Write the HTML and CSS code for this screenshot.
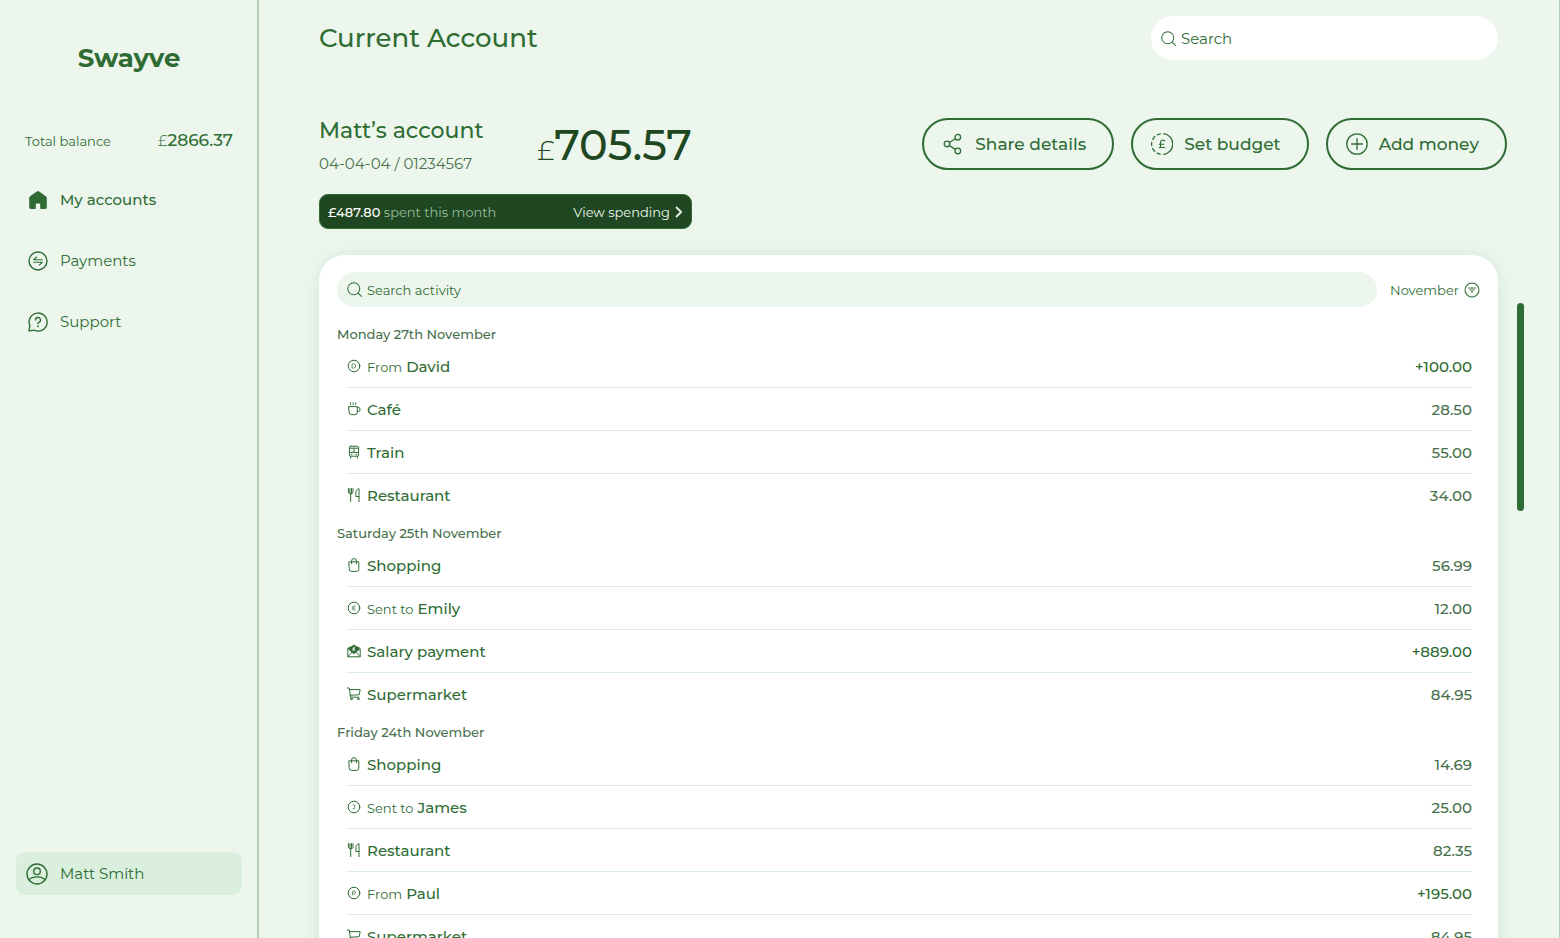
FILE: index.html
```html
<!DOCTYPE html>
<html lang="en-GB">
<head>
<meta charset="utf-8">
<title>Swayve – Current Account</title>
<meta name="viewport" content="width=device-width, initial-scale=1">
<link rel="stylesheet" href="styles.css">
</head>
<body>
<svg class="sprite" aria-hidden="true">
  <symbol id="i-search" viewBox="0 0 16 16"><circle cx="7.2" cy="7.2" r="6.4"/><path d="M11.8 11.800 15.400 15.400"/></symbol>
  <symbol id="i-cup" viewBox="0 0 14 14"><path d="M2 4.600h8.300v5.700a2.400 2.400 0 0 1-2.400 2.400H4.400A2.400 2.400 0 0 1 2 10.300zM10.300 5.400h1a1.700 1.700 0 0 1 1.700 1.700v.7a1.700 1.700 0 0 1-1.700 1.700h-1M3.500.9v1.500M6.100.9v1.500M8.700.9v1.500"/></symbol>
  <symbol id="i-train" viewBox="0 0 14 14"><rect x="2.400" y="1.200" width="9.200" height="10" rx="1.300"/><path d="M2.400 3.200h9.200M2.400 7.400h9.200M7 3.200v4.200M4.300 9.300h.8M8.900 9.300h.8M3.600 11.200v1.900M10.400 11.200v1.900"/></symbol>
  <symbol id="i-food" viewBox="0 0 14 14"><path d="M1.400.6v3.400c0 1.200.9 1.800 2.300 1.800S6 5.200 6 4V.6M2.900.6v5M4.500.6v5M3.700 5.800v7.800M12 13.600V.7C9.700 1 8.900 3 8.900 5v3.500H12"/></symbol>
  <symbol id="i-bag" viewBox="0 0 14 14"><path d="M2.200 3.800h9.600v7.400a2.200 2.200 0 0 1-2.200 2.200H4.400a2.200 2.200 0 0 1-2.200-2.200zM4.600 5.700V3a2.400 2.400 0 0 1 4.800 0v2.700"/></symbol>
  <symbol id="i-salary" viewBox="0 0 14 14"><path class="solid" d="M1.200 3.600 4.400 2.200 7 .4l2.600 1.800 3.200 1.400-1 2.400L7 9.600 2.200 6z"/><path d="M.8 4.600v8.200h12.400V4.600L7 9.400zM.8 12.800l4.300-4.700M13.200 12.800 8.900 8.100"/><path class="knock" d="M7.900 3.300c-1.100-.5-1.700 0-1.500 1l.2 1.700H6m0 .1h2M6 4.800h1.600"/></symbol>
  <symbol id="i-cart" viewBox="0 0 14 14"><path d="M.4 1h1.800l1.400 9.200h8.300M2.500 2.600h10.700l-1 5.100-9 .6"/><circle cx="4.400" cy="11.900" r=".8"/><circle cx="11.200" cy="11.900" r=".8"/></symbol>
  <symbol id="i-d" viewBox="0 0 14 14"><circle cx="7" cy="7" r="5.800"/><path class="letter" d="M5.400 5h1.300a2 2 0 0 1 0 4H5.400z"/></symbol>
  <symbol id="i-e" viewBox="0 0 14 14"><circle cx="7" cy="7" r="5.800"/><path class="letter" d="M8.300 5H5.900v4h2.400M5.900 7h2"/></symbol>
  <symbol id="i-j" viewBox="0 0 14 14"><circle cx="7" cy="7" r="5.800"/><path class="letter" d="M6.200 5h1.500v2.900c0 1.300-1.400 1.400-1.800.5"/></symbol>
  <symbol id="i-p" viewBox="0 0 14 14"><circle cx="7" cy="7" r="5.800"/><path class="letter" d="M5.700 9.100V5h1.500a1.300 1.300 0 0 1 0 2.700H5.700"/></symbol>
</svg>

<div class="app">
  <aside class="sidebar">
    <a class="logo" href="#">Swayve</a>
    <p class="total"><span class="total-label">Total balance</span><span class="total-sum"><span class="pound">£</span>2866.37</span></p>
    <nav class="nav" aria-label="Main">
      <a class="nav-item is-active" href="#">
        <svg class="nav-icon" viewBox="0 0 20 20"><path class="solid" d="M8.800 1.400 2.200 6.200A2.200 2.200 0 0 0 1.200 8v9.600c0 .8.600 1.400 1.400 1.400h4.200c.6 0 1-.4 1-1v-3.400c0-.7.5-1.200 1.200-1.200h2c.7 0 1.200.5 1.200 1.200V18c0 .6.400 1 1 1h4.200c.8 0 1.400-.6 1.400-1.400V8a2.200 2.200 0 0 0-1-1.800l-6.600-4.800a2 2 0 0 0-2.400 0z"/></svg>
        My accounts</a>
      <a class="nav-item" href="#">
        <svg class="nav-icon" viewBox="0 0 20 20"><circle cx="10" cy="10" r="9"/><path class="fine" d="M14.300 8.700H5.700L8.600 6M5.700 11.300h8.600L11.400 14"/></svg>
        Payments</a>
      <a class="nav-item" href="#">
        <svg class="nav-icon" viewBox="0 0 20 20"><path d="M1 19l.9-5.300A9 9 0 1 1 6.100 18.100C4.300 18.500 2.700 18.200 1 19z"/><path d="M7.500 8a2.500 2.500 0 1 1 3.600 2.200c-.8.400-1.100.8-1.100 1.700"/><circle class="solid" cx="10" cy="14.400" r=".9"/></svg>
        Support</a>
    </nav>
    <button class="user" type="button">
      <svg class="user-icon" viewBox="0 0 22 22"><circle cx="11" cy="11" r="10"/><circle cx="11" cy="8.300" r="3.300"/><path d="M2.900 16.700c1.800-1.800 4.700-2.800 8.100-2.800s6.300 1 8.100 2.800"/></svg>
      Matt Smith</button>
  </aside>

  <main class="main">
    <header class="topbar">
      <h1>Current Account</h1>
      <label class="search">
        <svg class="search-icon"><use href="#i-search"/></svg>
        <input type="search" placeholder="Search" aria-label="Search">
      </label>
    </header>

    <section class="account">
      <div class="summary">
        <div class="summary-head">
          <div>
            <h2>Matt’s account</h2>
            <p class="number">04-04-04 / 01234567</p>
          </div>
          <p class="balance"><span class="pound">£</span>705.57</p>
        </div>
        <a class="spending" href="#">
          <span class="spent"><strong>£487.80</strong> spent this month</span>
          <span>View spending</span>
          <svg class="chevron" viewBox="0 0 8 12"><path d="M1.500 1.500 6.200 6l-4.700 4.500"/></svg>
        </a>
      </div>
      <div class="actions">
        <button type="button">
          <svg class="action-icon" viewBox="0 0 22 22"><circle cx="5" cy="11" r="2.800"/><circle cx="15.800" cy="4.200" r="2.800"/><circle cx="15.800" cy="18" r="2.800"/><path d="M7.400 9.500 13.400 5.700M7.400 12.600l6 3.800"/></svg>
          Share details</button>
        <button type="button">
          <svg class="action-icon" viewBox="0 0 22 22"><path d="M12.800.7a10.400 10.400 0 0 1 0 20.600M9.200 21.200a10.400 10.400 0 0 1-3-1M3.700 18.400a10.400 10.400 0 0 1-2-3M.7 12.500a10.400 10.400 0 0 1 0-3M1.800 6.400a10.400 10.400 0 0 1 2-2.900M6.200 1.800a10.400 10.400 0 0 1 3.200-1"/><path class="fine" d="M13.600 7.900c-1.600-1.500-4.100-.8-4.100 1.400v5.200M8.200 14.500h5.600M8.200 11.300h4.400"/></svg>
          Set budget</button>
        <button type="button">
          <svg class="action-icon" viewBox="0 0 22 22"><circle cx="11" cy="11" r="10.200"/><path d="M11 5.600v10.800M5.600 11h10.800"/></svg>
          Add money</button>
      </div>
    </section>

    <div class="activity">
      <section class="card" aria-label="Activity">
        <div class="toolbar">
          <label class="filter">
            <svg class="search-icon"><use href="#i-search"/></svg>
            <input type="search" placeholder="Search activity" aria-label="Search activity">
          </label>
          <button class="month" type="button">November
            <svg class="month-icon" viewBox="0 0 16 16"><circle cx="8" cy="8" r="7"/><path d="M4.700 6h6.600M5.900 8h4.200M7.300 10h1.400"/></svg>
          </button>
        </div>

        <section class="day">
          <h3>Monday 27th November</h3>
          <ul>
            <li><svg><use href="#i-d"/></svg><span class="name"><small>From</small> David</span><span class="sum is-in">+100.00</span></li>
            <li><svg><use href="#i-cup"/></svg><span class="name">Café</span><span class="sum">28.50</span></li>
            <li><svg><use href="#i-train"/></svg><span class="name">Train</span><span class="sum">55.00</span></li>
            <li><svg><use href="#i-food"/></svg><span class="name">Restaurant</span><span class="sum">34.00</span></li>
          </ul>
        </section>
        <section class="day">
          <h3>Saturday 25th November</h3>
          <ul>
            <li><svg><use href="#i-bag"/></svg><span class="name">Shopping</span><span class="sum">56.99</span></li>
            <li><svg><use href="#i-e"/></svg><span class="name"><small>Sent to</small> Emily</span><span class="sum">12.00</span></li>
            <li><svg><use href="#i-salary"/></svg><span class="name">Salary payment</span><span class="sum is-in">+889.00</span></li>
            <li><svg><use href="#i-cart"/></svg><span class="name">Supermarket</span><span class="sum">84.95</span></li>
          </ul>
        </section>
        <section class="day">
          <h3>Friday 24th November</h3>
          <ul>
            <li><svg><use href="#i-bag"/></svg><span class="name">Shopping</span><span class="sum">14.69</span></li>
            <li><svg><use href="#i-j"/></svg><span class="name"><small>Sent to</small> James</span><span class="sum">25.00</span></li>
            <li><svg><use href="#i-food"/></svg><span class="name">Restaurant</span><span class="sum">82.35</span></li>
            <li><svg><use href="#i-p"/></svg><span class="name"><small>From</small> Paul</span><span class="sum is-in">+195.00</span></li>
            <li><svg><use href="#i-cart"/></svg><span class="name">Supermarket</span><span class="sum">84.95</span></li>
          </ul>
        </section>
      </section>
      <div class="thumb" aria-hidden="true"></div>
    </div>
  </main>
</div>
</body>
</html>
```
FILE: styles.css
```css
:root {
  --page: #ecf6ed;
  --tint: #daefdd;
  --green: #2f6c34;
  --dark: #1f4722;
  --muted: #47704b;
  --line: #b2d0b7;
}

* { box-sizing: border-box; }

body {
  margin: 0;
  background: var(--page);
  color: var(--green);
  font-family: Montserrat, Inter, "Liberation Sans", sans-serif;
  font-size: 15px;
}

h1, h2, h3, p, ul { margin: 0; padding: 0; font-weight: 400; }
ul { list-style: none; }
a { color: inherit; text-decoration: none; }
button, input { font: inherit; color: inherit; border: 0; padding: 0; background: none; }
button { cursor: pointer; }
svg { flex: none; fill: none; stroke: currentColor; stroke-linecap: round; stroke-linejoin: round; }
.solid { fill: currentColor; stroke: none; }
.knock { stroke: #fff; stroke-width: 0.8; }
.letter { stroke-width: 0.7; }
.fine { stroke-width: 1.1; }
.sprite { display: none; }

.app { display: flex; height: 100vh; overflow: hidden; border-right: 1px solid var(--line); }

/* Sidebar */
.sidebar {
  display: flex;
  flex-direction: column;
  flex: none;
  width: 259px;
  padding: 40px 15px 43px 16px;
  border-right: 2px solid var(--line);
}
.logo { align-self: center; font-size: 26px; font-weight: 700; line-height: 36px; }
.total {
  display: flex;
  align-items: baseline;
  justify-content: space-between;
  margin-top: 52px;
  padding: 0 9px;
  line-height: 24px;
}
.total-label { font-size: 13px; }
.total-sum { font-size: 17px; font-weight: 500; }
.total-sum .pound { font-size: 15px; font-weight: 300; }
.nav { display: flex; flex-direction: column; margin-top: 16px; }
.nav-item, .user { display: flex; align-items: center; gap: 12px; }
.nav-item { height: 61px; padding-left: 12px; }
.nav-item.is-active { font-weight: 500; }
.nav-icon { width: 20px; height: 20px; stroke-width: 1.4; }
.user {
  height: 43px;
  margin-top: auto;
  padding: 0 10px;
  border-radius: 9px;
  background: var(--tint);
}
.user-icon { width: 22px; height: 22px; stroke-width: 1.4; }

/* Main column */
.main { flex: 1; min-width: 0; padding: 16px 35px 0 60px; }
.topbar { display: flex; align-items: center; justify-content: space-between; padding-right: 26px; }
h1 { font-size: 26px; font-weight: 500; line-height: 36px; }
.search, .filter { display: flex; align-items: center; gap: 5px; padding: 0 10px; border-radius: 22px; }
.search { width: 347px; height: 44px; background: #fff; }
.search-icon { width: 15px; height: 15px; stroke-width: 1.1; }
input { flex: 1; min-width: 0; outline: 0; }
input::placeholder { color: inherit; opacity: 1; }

.account {
  display: flex;
  align-items: flex-start;
  justify-content: space-between;
  margin-top: 58px;
  padding-right: 17px;
}
.summary { width: 373px; }
.summary-head { display: flex; justify-content: space-between; }
h2 { font-size: 22px; font-weight: 500; line-height: 26px; }
.number { margin-top: 8px; color: var(--muted); line-height: 24px; }
.balance { color: var(--dark); font-size: 43px; font-weight: 500; line-height: 54px; }
.balance .pound { font-size: 27px; font-weight: 300; line-height: 1; }
.spending {
  display: flex;
  align-items: center;
  height: 35px;
  margin-top: 18px;
  padding: 0 8px;
  border: 1px solid var(--green);
  border-radius: 9px;
  background: var(--dark);
  color: #ecf6ed;
  font-size: 13px;
}
.spent { flex: 1; color: #98bd9c; }
.spent strong { color: #fff; font-weight: 500; }
.chevron { width: 8px; height: 12px; margin-left: 5px; stroke-width: 1.8; }

.actions { display: flex; gap: 17px; }
.actions button {
  display: flex;
  align-items: center;
  gap: 11px;
  height: 52px;
  padding: 0 26px 0 18px;
  border: 2px solid var(--green);
  border-radius: 26px;
  font-size: 17px;
  font-weight: 500;
}
.action-icon { width: 22px; height: 22px; stroke-width: 1.3; }

/* Activity card */
.activity { display: flex; align-items: flex-start; gap: 19px; margin-top: 26px; }
.card {
  flex: 1;
  min-width: 0;
  padding: 17px 18px;
  border-radius: 26px;
  background: #fff;
  box-shadow: 0 0 18px rgba(47, 108, 52, 0.1);
}
.thumb { flex: none; width: 7px; height: 208px; margin-top: 48px; border-radius: 4px; background: var(--green); }
.toolbar { display: flex; align-items: center; gap: 13px; margin-bottom: 17px; font-size: 13px; }
.filter { flex: 1; height: 35px; background: var(--page); }
.month { display: flex; align-items: center; gap: 5px; }
.month-icon { width: 16px; height: 16px; stroke-width: 1.1; }

.day { margin-bottom: 6px; }
h3 { color: var(--muted); font-size: 13px; font-weight: 500; line-height: 21px; }
.day ul { padding: 0 8px 0 9px; }
li {
  display: flex;
  align-items: center;
  height: 43px;
  border-bottom: 1px solid var(--tint);
}
li:last-child { border-bottom-color: transparent; }
li svg { width: 14px; height: 14px; margin: 0 6px 0 1px; stroke-width: 1; }
.name { flex: 1; font-weight: 500; }
.name small { font-size: 13px; font-weight: 400; }
.sum { color: var(--muted); font-weight: 500; }
.sum.is-in { color: var(--green); }
```
